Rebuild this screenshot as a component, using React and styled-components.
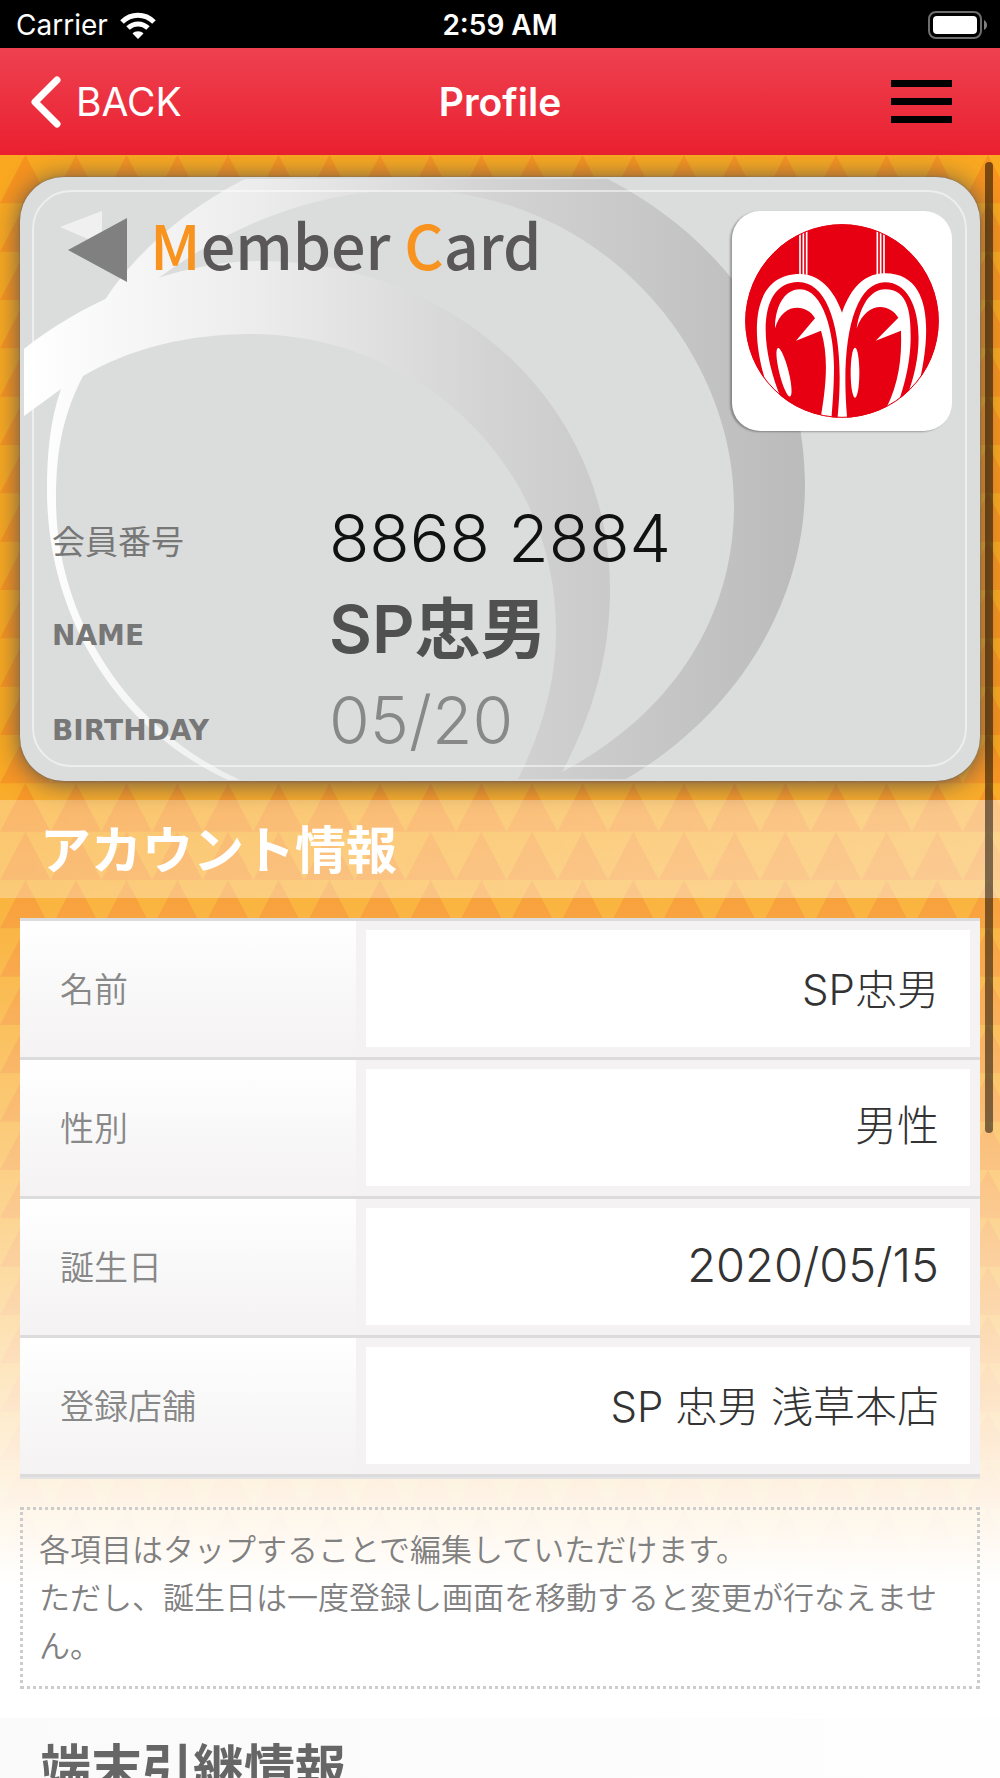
import React from 'react'
import styled, { createGlobalStyle } from 'styled-components'

const latin = `Inter, "Noto Sans CJK JP", sans-serif`;
const japanese = `"Noto Sans CJK JP", sans-serif`;

const GlobalStyle = createGlobalStyle`
  * {
    box-sizing: border-box;
  }
  body {
    margin: 0;
    background: #fff;
    font-family: ${japanese};
  }
`;
const Page = styled.div`
  display: flex;
  flex-direction: column;
  height: 100vh;
  overflow: hidden;
`;
const StatusBar = styled.div`
  display: grid;
  grid-template-columns: 1fr auto 1fr;
  align-items: center;
  flex-shrink: 0;
  height: 48px;
  padding: 2px 13px 0;
  background: #000;
  color: #fff;
  font-family: ${latin};
  font-size: 28px;
`;
const Carrier = styled.span`
  display: flex;
  align-items: center;
  gap: 12px;
  padding-left: 3px;
`;
const Clock = styled.span`
  font-weight: 600;
`;
const Battery = styled.svg`
  justify-self: end;
`;
const NavBar = styled.header`
  display: grid;
  grid-template-columns: 1fr auto 1fr;
  align-items: center;
  flex-shrink: 0;
  height: 107px;
  padding: 0 30px;
  background: linear-gradient(#ee4150, #ea2030);
  color: #fff;
  font-family: ${latin};
`;
const BackButton = styled.button`
  display: flex;
  align-items: center;
  justify-self: start;
  gap: 14px;
  padding: 0;
  border: 0;
  background: none;
  color: #fff;
  font-family: inherit;
  font-size: 39px;
`;
const NavTitle = styled.h1`
  margin: 0;
  font-size: 39px;
  font-weight: 600;
`;
const MenuButton = styled.button`
  display: flex;
  flex-direction: column;
  justify-self: end;
  gap: 11px;
  width: 61px;
  margin-right: 18px;
  padding: 0;
  border: 0;
  background: none;
`;
const MenuBar = styled.span`
  height: 7px;
  background: #000;
`;
const Content = styled.main`
  position: relative;
  flex: 1;
  padding-top: 22px;
  isolation: isolate;
`;
const Backdrop = styled.svg`
  position: absolute;
  inset: 0;
  z-index: -1;
  width: 100%;
  height: 100%;
`;
const ScrollThumb = styled.div`
  position: absolute;
  top: 7px;
  right: 7px;
  width: 8px;
  height: 971px;
  border-radius: 4px;
  background: rgba(0, 0, 0, 0.5);
`;
const Card = styled.section`
  position: relative;
  display: flex;
  flex-direction: column;
  justify-content: space-between;
  min-height: 604px;
  margin: 0 20px;
  padding: 34px 28px 3px 32px;
  border-radius: 44px;
  background: #dbdddc;
  box-shadow: 0 0 2px #666, 0 2px 26px rgba(80, 80, 80, 0.95);
  isolation: isolate;
`;
const CardArt = styled.svg`
  position: absolute;
  inset: 0;
  z-index: -1;
  width: 100%;
  height: 100%;
`;
const CardTop = styled.div`
  display: flex;
  justify-content: space-between;
`;
const CardTitle = styled.h2`
  margin: 0;
  padding-left: 98px;
  color: #595757;
  font-size: 61px;
  font-weight: 500;
  line-height: 66px;
`;
const Initial = styled.span`
  color: #f7931e;
`;
const Logo = styled.svg`
  width: 220px;
  height: 220px;
  border-radius: 28px;
  background: #fff;
  box-shadow: -2px 1px 2px rgba(0, 0, 0, 0.3);
`;
const CardInfo = styled.div`
  display: grid;
  grid-template-columns: 277px 1fr;
`;
const CardLabels = styled.div`
  color: #777;
  line-height: 95px;
`;
const CardLabel = styled.div`
  font-family: ${(props) => (props.$kanji ? japanese : '"DejaVu Sans", sans-serif')};
  font-size: ${(props) => (props.$kanji ? 33 : 28)}px;
  font-weight: ${(props) => (props.$kanji ? 400 : 700)};
`;
const CardValues = styled.div`
  font-family: ${latin};
  font-size: 66px;
  line-height: 91px;
`;
const CardValue = styled.div`
  color: ${(props) => props.$color};
  font-weight: ${(props) => (props.$bold ? 600 : 300)};
`;
const SectionTitle = styled.h2`
  margin: ${(props) => (props.$plain ? '29px 0 0' : '19px 0 20px')};
  padding: 0 40px 4px;
  background: ${(props) =>
    props.$plain
      ? 'linear-gradient(to right, #fafafa, #fefefe)'
      : 'linear-gradient(to right, rgba(255, 255, 255, 0.3), rgba(255, 255, 255, 0.45))'};
  color: ${(props) => (props.$plain ? '#666' : '#fff')};
  font-size: 51px;
  font-weight: 700;
  line-height: 94px;
`;
const TableWrap = styled.div`
  margin: 0 20px;
  border-top: 3px solid #dcdcdc;
  border-bottom: 2px solid #e4e4e4;
`;
const Table = styled.table`
  width: 100%;
  border-collapse: separate;
  border-spacing: 0;
  table-layout: fixed;
`;
const Th = styled.th`
  width: 35%;
  padding: 0 40px 4px;
  border-bottom: 3px solid #dcdcdc;
  background: linear-gradient(#fff, #f4f2f3);
  color: #888;
  font-size: 34px;
  font-weight: 350;
  text-align: left;
`;
const Td = styled.td`
  padding: 9px 10px 10px;
  border-bottom: 3px solid #dcdcdc;
  background: #f4f2f3;
`;
const Field = styled.input`
  display: block;
  width: 100%;
  height: 117px;
  padding: 0 31px 4px;
  border: 0;
  border-radius: 0;
  background: #fff;
  color: #333;
  font-family: ${latin};
  font-size: ${(props) => (props.$numeric ? 47 : 42)}px;
  font-weight: 300;
  text-align: right;
  text-align-last: right;
  appearance: none;
`;
const Note = styled.p`
  margin: 28px 20px 0;
  padding: 14px 16px 18px;
  border: 3px dotted #ccc;
  color: #808080;
  font-size: 31px;
  font-weight: 350;
  line-height: 48px;
`;

const WifiIcon = () => (
  <svg width="36" height="27" viewBox="0 0 36 27" aria-hidden="true">
    <g fill="none" stroke="#fff" strokeWidth="5">
      <path d="M2 10 C11 1 25 1 34 10" />
      <path d="M8 16 C14 10.500 22 10.500 28 16" />
    </g>
    <path d="M18 27 L12.500 21.500 C15 18.500 21 18.500 23.500 21.500 Z" fill="#fff" />
  </svg>
);

const BatteryIcon = () => (
  <Battery width="59" height="28" viewBox="0 0 59 28" aria-hidden="true">
    <rect x="1" y="1" width="52" height="26" rx="7" fill="none" stroke="#6e6e6e" strokeWidth="2" />
    <rect x="5" y="5" width="44" height="18" rx="4" fill="#fff" />
    <path d="M56 9 C60 11 60 17 56 19 Z" fill="#808080" />
  </Battery>
);

const cells = [0, 1, 2];

const Triangles = () => (
  <Backdrop aria-hidden="true">
    <defs>
      <pattern id="triangles" width="152" height="145" patternUnits="userSpaceOnUse">
        <rect width="152" height="145" fill="#f9a820" />
        {cells.map((row) =>
          cells.map((col) => (
            <path
              key={`${row}-${col}`}
              transform={`scale(${152 / 3} ${145 / 3}) translate(${col} ${row})`}
              d="M0.5 0 L1 1 H0 Z"
              fill="#f7931e"
            />
          ))
        )}
      </pattern>
      <linearGradient id="fade" gradientUnits="userSpaceOnUse" x1="0" x2="0" y1="590" y2="1430">
        <stop offset="0" stopColor="#fff" stopOpacity="0" />
        <stop offset="0.25" stopColor="#fff" stopOpacity="0.19" />
        <stop offset="0.55" stopColor="#fff" stopOpacity="0.5" />
        <stop offset="0.88" stopColor="#fff" stopOpacity="0.87" />
        <stop offset="1" stopColor="#fff" />
      </linearGradient>
    </defs>
    <rect width="100%" height="100%" fill="url(#triangles)" />
    <rect width="100%" height="100%" fill="url(#fade)" />
  </Backdrop>
);

const Swirl = () => (
  <CardArt viewBox="20 177 960 604" preserveAspectRatio="none" aria-hidden="true">
    <defs>
      <linearGradient id="swirl" gradientUnits="userSpaceOnUse" x1="24" x2="805" y1="0" y2="0">
        <stop offset="0" stopColor="#fff" />
        <stop offset="0.3" stopColor="#ececec" />
        <stop offset="0.6" stopColor="#d3d3d3" />
        <stop offset="1" stopColor="#babbba" />
      </linearGradient>
    </defs>
    <g fill="url(#swirl)">
      <path d="M105 300 C130 260 180 212 245 179 H608 C735 245 805 360 805 485 C805 605 735 715 626 779 H540 L562 772 C670 715 734 620 734 505 C734 350 600 190 410 190 C320 190 235 222 157 279 Z" />
      <path d="M24 349 C80 305 170 261 260 261 C450 261 610 400 610 590 C610 660 590 720 562 772 L560 779 H518 C540 735 556 685 556 630 C556 460 415 334 250 334 C190 334 130 348 83 376 C60 420 56 460 56 500 C56 610 120 725 240 780 H228 C110 725 47 610 47 490 C47 455 50 420 61 389 L24 416 Z" />
    </g>
    <rect x="33" y="191" width="933" height="575" rx="38" fill="none" stroke="#fff" strokeOpacity="0.5" strokeWidth="2" />
    <path d="M60 227 L102 211 V245 Z" fill="#f0f0f0" />
    <path d="M68 250 L127 218 V282 Z" fill="#808080" />
  </CardArt>
);

const ShopLogo = () => (
  <Logo viewBox="36 33 660 660" role="img" aria-label="Shop logo">
    <defs>
      <clipPath id="disc">
        <circle cx="366" cy="363" r="290" />
      </clipPath>
    </defs>
    <g clipPath="url(#disc)">
      <rect x="36" y="33" width="660" height="660" fill="#e60012" />
      <path d="M240 80 V224 M250 80 V224 M260 80 V224 M472 80 V224 M482 80 V224 M492 80 V224" stroke="#fff" strokeWidth="5" />
      <path d="M142 560 C90 410 90 222 240 222 C310 222 350 290 366 338 C385 285 420 220 495 220 C650 220 630 430 590 580 L590 700 H150 Z" fill="#fff" />
      <path d="M185 600 C110 420 120 246 235 246 C330 246 378 410 352 660 L200 690 Z" fill="#e60012" />
      <path d="M382 660 C360 430 400 247 495 247 C600 247 625 430 560 590 L540 690 Z" fill="#e60012" />
      <path d="M165 385 C165 325 190 268 240 268 C310 268 342 400 342 500 C342 560 338 610 334 660 L302 655 C314 580 330 480 303 392 L228 422 L285 355 C265 315 190 300 165 385 Z" fill="#fff" />
      <path d="M410 385 C420 320 450 268 495 268 C565 268 572 340 572 410 C572 490 550 570 530 620 L500 622 C535 550 546 480 543 392 L467 422 L535 353 C510 310 440 300 410 385 Z" fill="#fff" />
      <ellipse cx="192" cy="517" rx="14" ry="75" fill="#fff" transform="rotate(-14 192 517)" />
      <ellipse cx="405" cy="518" rx="13" ry="75" fill="#fff" />
    </g>
    <circle cx="366" cy="363" r="289" fill="none" stroke="#e60012" strokeWidth="3" />
  </Logo>
);

const App = () => {

  return (
    <Page>
      <GlobalStyle />
      <StatusBar>
        <Carrier>Carrier <WifiIcon /></Carrier>
        <Clock>2:59 AM</Clock>
        <BatteryIcon />
      </StatusBar>
      <NavBar>
        <BackButton type="button">
          <svg width="32" height="52" viewBox="0 0 32 52" aria-hidden="true">
            <path d="M27 4 L5 26 L27 48" fill="none" stroke="#fff" strokeWidth="7" strokeLinecap="round" strokeLinejoin="round" />
          </svg>
          BACK
        </BackButton>
        <NavTitle>Profile</NavTitle>
        <MenuButton type="button" aria-label="Menu">
          <MenuBar />
          <MenuBar />
          <MenuBar />
        </MenuButton>
      </NavBar>
      <Content>
        <Triangles />
        <Card>
          <Swirl />
          <CardTop>
            <CardTitle>
              <Initial>M</Initial>ember <Initial>C</Initial>ard
            </CardTitle>
            <ShopLogo />
          </CardTop>
          <CardInfo>
            <CardLabels>
              <CardLabel $kanji>会員番号</CardLabel>
              <CardLabel>NAME</CardLabel>
              <CardLabel>BIRTHDAY</CardLabel>
            </CardLabels>
            <CardValues>
              <CardValue $color="#111">8868 2884</CardValue>
              <CardValue $color="#505050" $bold>SP忠男</CardValue>
              <CardValue $color="#888">05/20</CardValue>
            </CardValues>
          </CardInfo>
        </Card>
        <SectionTitle>アカウント情報</SectionTitle>
        <TableWrap>
          <Table>
            <tbody>
              <tr>
                <Th scope="row"><label htmlFor="name">名前</label></Th>
                <Td><Field id="name" defaultValue="SP忠男" /></Td>
              </tr>
              <tr>
                <Th scope="row"><label htmlFor="gender">性別</label></Th>
                <Td>
                  <Field as="select" id="gender" defaultValue="男性">
                    <option>男性</option>
                    <option>女性</option>
                  </Field>
                </Td>
              </tr>
              <tr>
                <Th scope="row"><label htmlFor="birthday">誕生日</label></Th>
                <Td><Field id="birthday" $numeric defaultValue="2020/05/15" /></Td>
              </tr>
              <tr>
                <Th scope="row"><label htmlFor="shop">登録店舗</label></Th>
                <Td><Field id="shop" defaultValue="SP 忠男 浅草本店" /></Td>
              </tr>
            </tbody>
          </Table>
        </TableWrap>
        <Note>
          各項目はタップすることで編集していただけます。<br />
          ただし、誕生日は一度登録し画面を移動すると変更が行なえません。
        </Note>
        <SectionTitle $plain>端末引継情報</SectionTitle>
        <ScrollThumb />
      </Content>
    </Page>
  )
}

export default App
